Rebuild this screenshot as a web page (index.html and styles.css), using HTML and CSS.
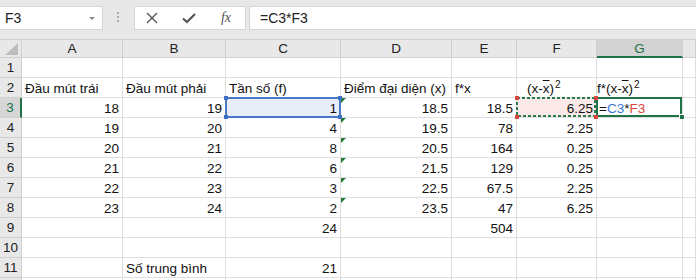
FILE: index.html
```html
<!DOCTYPE html>
<html lang="vi">
<head>
  <meta charset="UTF-8" />
  <title>Bảng tính</title>
  <link rel="stylesheet" href="styles.css">
</head>
<body>
  <div class="toolbar">
    <div class="namebox">F3 <span class="caret"></span></div>
    <div class="grip"><i></i><i></i><i></i></div>
    <div class="fxbox">
      <span class="ico">
        <svg width="12" height="12" viewBox="0 0 12 12"><path d="M1 1L11 11M11 1L1 11" stroke="#555" stroke-width="1.4" fill="none"/></svg>
      </span>
      <span class="ico">
        <svg width="14" height="12" viewBox="0 0 14 12"><path d="M1 6.5L5 10L13 2" stroke="#555" stroke-width="2.2" fill="none"/></svg>
      </span>
      <span class="ico fx">fx</span>
    </div>
    <div class="formula">=C3*F3</div>
  </div>

  <div class="sheet">
    <!-- tiêu đề cột -->
    <div class="hd corner"><span class="tri"></span></div>
    <div class="hd">A</div><div class="hd">B</div><div class="hd">C</div><div class="hd">D</div>
    <div class="hd">E</div><div class="hd">F</div><div class="hd active">G</div><div class="hd"></div>

    <div class="rh">1</div>
    <div class="c"></div><div class="c"></div><div class="c"></div><div class="c"></div><div class="c"></div><div class="c"></div><div class="c"></div><div class="c"></div>

    <div class="rh">2</div>
    <div class="c t">Đầu mút trái</div>
    <div class="c t">Đầu mút phải</div>
    <div class="c t">Tần số (f)</div>
    <div class="c t">Điểm đại diện (x)</div>
    <div class="c t">f*x</div>
    <div class="c t indent">(x-<span class="bar">x</span>)<sup>2</sup></div>
    <div class="c t flush">f*(x-<span class="bar">x</span>)<sup>2</sup></div>
    <div class="c"></div>

    <div class="rh active">3</div>
    <div class="c">18</div>
    <div class="c">19</div>
    <div class="c sel">1<span class="h tl"></span><span class="h tr"></span><span class="h bl"></span><span class="h br"></span></div>
    <div class="c err">18.5</div>
    <div class="c">18.5</div>
    <div class="c copy">
      <svg class="ants"><rect x="1" y="1" width="calc(100% - 2px)" height="calc(100% - 2px)"/></svg>
      <span class="val">6.25</span>
      <span class="r tl"></span><span class="r tr"></span><span class="r bl"></span><span class="r br"></span>
    </div>
    <div class="c t cur">=<span class="ref1">C3</span>*<span class="ref2">F3</span><span class="fill"></span></div>
    <div class="c"></div>

    <div class="rh">4</div>
    <div class="c">19</div><div class="c">20</div><div class="c">4</div><div class="c err">19.5</div><div class="c">78</div><div class="c">2.25</div><div class="c"></div><div class="c"></div>

    <div class="rh">5</div>
    <div class="c">20</div><div class="c">21</div><div class="c">8</div><div class="c err">20.5</div><div class="c">164</div><div class="c">0.25</div><div class="c"></div><div class="c"></div>

    <div class="rh">6</div>
    <div class="c">21</div><div class="c">22</div><div class="c">6</div><div class="c err">21.5</div><div class="c">129</div><div class="c">0.25</div><div class="c"></div><div class="c"></div>

    <div class="rh">7</div>
    <div class="c">22</div><div class="c">23</div><div class="c">3</div><div class="c err">22.5</div><div class="c">67.5</div><div class="c">2.25</div><div class="c"></div><div class="c"></div>

    <div class="rh">8</div>
    <div class="c">23</div><div class="c">24</div><div class="c">2</div><div class="c err">23.5</div><div class="c">47</div><div class="c">6.25</div><div class="c"></div><div class="c"></div>

    <div class="rh">9</div>
    <div class="c"></div><div class="c"></div><div class="c">24</div><div class="c"></div><div class="c">504</div><div class="c"></div><div class="c"></div><div class="c"></div>

    <div class="rh">10</div>
    <div class="c"></div><div class="c"></div><div class="c"></div><div class="c"></div><div class="c"></div><div class="c"></div><div class="c"></div><div class="c"></div>

    <div class="rh">11</div>
    <div class="c"></div><div class="c t">Số trung bình</div><div class="c">21</div><div class="c"></div><div class="c"></div><div class="c"></div><div class="c"></div><div class="c"></div>

    <div class="rh"></div>
    <div class="c"></div><div class="c"></div><div class="c"></div><div class="c"></div><div class="c"></div><div class="c"></div><div class="c"></div><div class="c"></div>
  </div>
</body>
</html>
```

FILE: styles.css
```css
/* Chung */
body {
  margin: 0;
  background: #fff;
  color: #111;
  font-family: 'Liberation Sans', Arial, sans-serif;
  font-size: 13.5px;
  overflow: hidden;
}

/* Thanh công thức */
.toolbar {
  height: 39px;
  box-sizing: border-box;
  padding-top: 6px;
  background: #e8e8e8;
  display: flex;
  align-items: flex-start;
}
.namebox {
  width: 104px;
  height: 24px;
  margin-left: -1px;
  box-sizing: border-box;
  background: #fff;
  border: 1px solid #d6d6d6;
  display: flex;
  align-items: center;
  justify-content: space-between;
  padding: 0 7px 0 5px;
  font-size: 14px;
  color: #222;
}
.caret {
  width: 0;
  height: 0;
  border-left: 3px solid transparent;
  border-right: 3px solid transparent;
  border-top: 3px solid #888;
}
.grip {
  width: 2px;
  margin: 6px 15px 0 14px;
  display: flex;
  flex-direction: column;
  gap: 2px;
}
.grip i {
  width: 2px;
  height: 2px;
  background: #aaa;
}
.fxbox {
  width: 112px;
  height: 24px;
  box-sizing: border-box;
  background: #fff;
  border: 1px solid #d6d6d6;
  display: flex;
  align-items: center;
  padding-left: 7px;
  gap: 17px;
}
.ico {
  width: 20px;
  display: flex;
  justify-content: center;
  align-items: center;
}
.fx {
  font-family: 'Liberation Serif', serif;
  font-style: italic;
  font-size: 14px;
  color: #555;
}
.formula {
  flex: 1;
  height: 24px;
  margin-left: 3px;
  box-sizing: border-box;
  background: #fff;
  border: 1px solid #d6d6d6;
  border-right: none;
  padding-left: 10px;
  font-size: 14px;
  line-height: 22px;
  color: #222;
}

/* Lưới bảng tính */
.sheet {
  display: grid;
  grid-template-columns: 22px 101px 103px 115px 111px 65px 80px 86px 1fr;
  grid-template-rows: 19px repeat(12, 20px);
}
.sheet > div {
  box-sizing: border-box;
  border-right: 1px solid #dedede;
  border-bottom: 1px solid #dedede;
  position: relative;
  white-space: nowrap;
}
.hd {
  background: #e8e8e8;
  border-color: #cfcfcf !important;
  border-top: 1px solid #d8d8d8;
  text-align: center;
  line-height: 18px;
  color: #222;
}
.hd.active {
  background: #d3d3d3;
  color: #217346;
  border-bottom: 2px solid #217346 !important;
}
.corner .tri {
  position: absolute;
  right: 3px;
  bottom: 2px;
  width: 0;
  height: 0;
  border-left: 13px solid transparent;
  border-bottom: 12px solid #bdbdbd;
}
.rh {
  background: #e8e8e8;
  border-color: #cfcfcf !important;
  text-align: center;
  line-height: 20px;
  color: #222;
}
.rh.active {
  background: #d6d6d6;
  color: #217346;
  border-right: 2px solid #217346 !important;
}
.c {
  text-align: right;
  padding: 0 3px;
  line-height: 21px;
}
.c.t {
  text-align: left;
}
.c.indent {
  padding-left: 10px;
}
.c.flush {
  padding-left: 0;
}
.bar {
  text-decoration: overline;
}
sup {
  font-size: 10px;
  vertical-align: 5px;
  line-height: 0;
  margin-left: 1px;
}

/* Ô C3 được chọn */
.sel {
  background: #e8eef8;
}
.sel::after {
  content: '';
  position: absolute;
  top: -1px;
  left: -1px;
  right: -1px;
  bottom: -1px;
  border: 2px solid #4a78c8;
}
.h, .r {
  position: absolute;
  width: 4px;
  height: 4px;
  z-index: 2;
}
.h { background: #3f6fc4; }
.r { background: #d9453f; }
.tl { top: -2px; left: -2px; }
.tr { top: -2px; right: -2px; }
.bl { bottom: -2px; left: -2px; }
.br { bottom: -2px; right: -2px; }

/* Tam giác báo lỗi */
.err::before {
  content: '';
  position: absolute;
  top: 0;
  left: 0;
  border-top: 5px solid #1f7a35;
  border-right: 5px solid transparent;
}

/* Ô F3 tham chiếu */
.copy {
  background: #fbe9e9;
}
.ants {
  position: absolute;
  top: -1px;
  left: -1px;
  width: calc(100% + 1px);
  height: calc(100% + 1px);
  overflow: visible;
}
.ants rect {
  fill: none;
  stroke: #2e7a4c;
  stroke-width: 2;
  stroke-dasharray: 3 2;
}
.val {
  position: relative;
}

/* Ô G3 đang sửa */
.cur {
  padding-left: 2px;
}
.cur::after {
  content: '';
  position: absolute;
  top: -1px;
  left: -1px;
  right: 0;
  bottom: 0;
  border: 2px solid #217346;
}
.ref1 { color: #3c78d8; }
.ref2 { color: #d9453f; }
.fill {
  position: absolute;
  right: -3px;
  bottom: -3px;
  width: 4px;
  height: 4px;
  background: #217346;
  border: 1px solid #fff;
  z-index: 2;
}
```
